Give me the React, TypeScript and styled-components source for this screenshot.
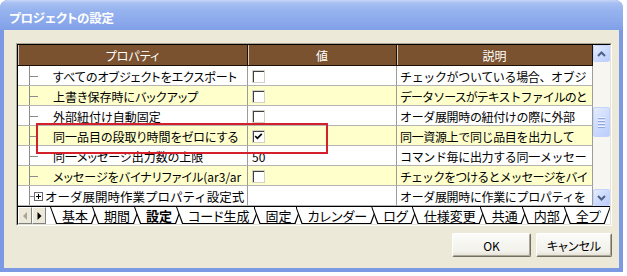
import React from 'react';
import styled, { createGlobalStyle } from 'styled-components';

const Global = createGlobalStyle`
  html, body { margin: 0; padding: 0; background: #ffffff; }
  body {
    font-family: "Noto Sans CJK JP", "Noto Sans", sans-serif;
    font-size: 12px;
    color: #000;
    font-feature-settings: "palt";
  }
`;

const Window = styled.div`
  width: 623px;
  height: 272px;
  display: flex;
  flex-direction: column;
  background: #7b9ae3;
  border-radius: 8px 8px 0 0;
  overflow: hidden;
`;

const TitleBar = styled.div`
  height: 30px;
  flex: none;
  box-sizing: border-box;
  display: flex;
  align-items: center;
  padding: 4px 0 0 9px;
  background: linear-gradient(#c6d6f8 0%, #a8c0f2 10%, #96b3ef 35%, #8dabec 65%, #819fe6 100%);
  color: #fff;
  font-weight: bold;
  font-size: 12.5px;
  letter-spacing: -0.2px;
`;

const Body = styled.div`
  flex: 1;
  margin: 0 4px 4px 4px;
  background: #ece9d8;
  padding: 13px 7px 0 12px;
  display: flex;
  flex-direction: column;
`;

const Frame = styled.div`
  position: relative;
  width: 596px;
  height: 183px;
  box-sizing: border-box;
  border: 1px solid;
  border-color: #aca899 #ffffff #ffffff #aca899;
`;

const FrameInner = styled.div`
  height: 100%;
  box-sizing: border-box;
  border: 1px solid;
  border-color: #000 #e3e0d4 #e3e0d4 #000;
  display: grid;
  grid-template-columns: 230px 149px 196px 1fr;
  grid-template-rows: 21px repeat(7, 20px) 1fr;
  background: #fff;
`;

const HeaderCell = styled.div`
  box-sizing: border-box;
  background: #7a5230;
  color: #fff;
  display: flex;
  align-items: center;
  justify-content: center;
  padding-top: 1px;
  border-right: 1px solid #1a1008;
  border-bottom: 1px solid #1a1008;
  box-shadow: inset 1px 0 0 #d9c6b2;
`;

const Cell = styled.div<{ $alt: boolean }>`
  box-sizing: border-box;
  background: ${p => (p.$alt ? '#ffffcc' : '#ffffff')};
  border-right: 1px solid #9c9c9c;
  border-bottom: 1px solid #b4b4b4;
  display: flex;
  align-items: center;
  overflow: hidden;
  white-space: nowrap;
`;

const PropCell = styled(Cell)`
  padding-left: 11px;
  align-items: stretch;
`;

const Connector = styled.span<{ $w: number }>`
  position: relative;
  flex: none;
  width: ${p => p.$w}px;
  border-left: 1px solid #8c8c8c;
  &::after {
    content: '';
    position: absolute;
    left: 0;
    top: 10px;
    width: ${p => p.$w}px;
    border-top: 1px solid #8c8c8c;
  }
`;

const PropText = styled.span<{ $gap: number; $big?: boolean }>`
  margin-left: ${p => p.$gap}px;
  padding-top: 1px;
  display: flex;
  align-items: center;
  font-size: ${p => (p.$big ? '12.5px' : '12px')};
  font-feature-settings: ${p => (p.$big ? 'normal' : '"palt"')};
`;

const Expander = styled.span`
  flex: none;
  align-self: center;
  width: 9px;
  height: 9px;
  margin-top: 1px;
  box-sizing: border-box;
  border: 1px solid #6a6a6a;
  background: #fff;
  position: relative;
  &::before {
    content: '';
    position: absolute;
    left: 1px;
    top: 3px;
    width: 5px;
    border-top: 1px solid #000;
  }
  &::after {
    content: '';
    position: absolute;
    left: 3px;
    top: 1px;
    height: 5px;
    border-left: 1px solid #000;
  }
`;

const ValueCell = styled(Cell)`
  padding: 1px 0 0 4px;
`;

const DescCell = styled(Cell)<{ $tight?: boolean }>`
  padding: 1px 0 0 3px;
  font-feature-settings: normal;
  letter-spacing: ${p => (p.$tight ? '-0.95px' : '-0.35px')};
`;

const CheckBox = styled.span`
  width: 13px;
  height: 13px;
  box-sizing: border-box;
  border: 1px solid;
  border-color: #808080 #ffffff #ffffff #808080;
  box-shadow: inset 1px 1px 0 #404040;
  background: #fff;
  display: flex;
  align-items: center;
  justify-content: center;
  outline: 1px solid #d4d0c8;
  outline-offset: -1px;
`;

const ScrollBar = styled.div`
  grid-column: 4;
  grid-row: 1 / 9;
  display: flex;
  flex-direction: column;
  background: #f7f6f1;
`;

const ScrollButton = styled.div`
  width: 17px;
  height: 17px;
  flex: none;
  box-sizing: border-box;
  border: 1px solid #c3d3fb;
  border-radius: 2px;
  background: linear-gradient(135deg, #e4ecfe 0%, #cddbfd 50%, #bccdfa 100%);
  display: flex;
  align-items: center;
  justify-content: center;
`;

const Track = styled.div`
  flex: 1;
  padding-top: 45px;
`;

const Thumb = styled(ScrollButton)`
  height: 30px;
  flex-direction: column;
  gap: 1px;
`;

const Grip = styled.span`
  width: 7px;
  height: 1px;
  background: #eef3fe;
  box-shadow: 0 1px 0 #8fa6df;
  margin-bottom: 1px;
`;

const TabStrip = styled.div`
  grid-column: 1 / -1;
  border-top: 1px solid #000;
  background: #fff;
  display: flex;
  align-items: flex-start;
  overflow: hidden;
`;

const NavButton = styled.div`
  width: 14px;
  height: 17px;
  flex: none;
  box-sizing: border-box;
  border: 1px solid;
  border-color: #ffffff #808080 #808080 #ffffff;
  background: #ece9d8;
  display: flex;
  align-items: center;
  justify-content: center;
`;

const Tabs = styled.div`
  display: flex;
  margin-left: 4px;
`;

const TAB_SHAPE = 'polygon(0 0, 100% 0, calc(100% - 6px) 100%, 6px 100%)';

const Tab = styled.div<{ $active?: boolean; $z: number }>`
  position: relative;
  z-index: ${p => p.$z};
  flex: none;
  height: 17px;
  padding: 0 10px 0 12px;
  margin-right: -6px;
  display: flex;
  align-items: center;
  font-size: 13px;
  font-weight: ${p => (p.$active ? 'bold' : 'normal')};
  &::before {
    content: '';
    position: absolute;
    inset: 0;
    background: #000;
    clip-path: ${TAB_SHAPE};
    z-index: -1;
  }
  &::after {
    content: '';
    position: absolute;
    inset: 0 1px 1px 1px;
    background: #fff;
    clip-path: ${TAB_SHAPE};
    z-index: -1;
  }
`;

const Highlight = styled.div`
  position: absolute;
  left: 19px;
  top: 79px;
  width: 292px;
  height: 31px;
  box-sizing: border-box;
  border: 2px solid #d3202a;
  pointer-events: none;
`;

const ButtonRow = styled.div`
  display: flex;
  justify-content: flex-end;
  gap: 5px;
  margin-top: 7px;
`;

const Button = styled.button<{ $w: number }>`
  width: ${p => p.$w}px;
  height: 24px;
  box-sizing: border-box;
  font-family: "Noto Sans CJK JP", "Noto Sans", sans-serif;
  font-size: 12px;
  font-feature-settings: "palt";
  color: #000;
  border: 1px solid;
  border-color: #ffffff #716f64 #716f64 #ffffff;
  box-shadow: inset -1px -1px 0 #aca899;
  border-radius: 2px;
  background: linear-gradient(#fbfbf9, #f2f1ea 80%, #e3e0d3);
  padding: 0;
`;

type Row = {
  name: string;
  value: 'box' | 'checked' | string;
  desc: string;
  group?: boolean;
};

const rows: Row[] = [
  { name: 'すべてのオブジェクトをエクスポート', value: 'box', desc: 'チェックがついている場合、オブジ' },
  { name: '上書き保存時にバックアップ', value: 'box', desc: 'データソースがテキストファイルのと' },
  { name: '外部紐付け自動固定', value: 'box', desc: 'オーダ展開時の紐付けの際に外部' },
  { name: '同一品目の段取り時間をゼロにする', value: 'checked', desc: '同一資源上で同じ品目を出力して' },
  { name: '同一メッセージ出力数の上限', value: '50', desc: 'コマンド毎に出力する同一メッセー' },
  { name: 'メッセージをバイナリファイル(ar3/ar', value: 'box', desc: 'チェックをつけるとメッセージをバイ' },
  { name: 'オーダ展開時作業プロパティ設定式', value: '', desc: 'オーダ展開時に作業にプロパティを', group: true },
];

const tabs = ['基本', '期間', '設定', 'コード生成', '固定', 'カレンダー', 'ログ', '仕様変更', '共通', '内部', '全プ'];

const ChevronUp = () => (
  <svg width="9" height="6" viewBox="0 0 9 6">
    <polyline points="1,5 4.5,1.5 8,5" fill="none" stroke="#4d6185" strokeWidth="2" />
  </svg>
);

const ChevronDown = () => (
  <svg width="9" height="6" viewBox="0 0 9 6">
    <polyline points="1,1 4.5,4.5 8,1" fill="none" stroke="#4d6185" strokeWidth="2" />
  </svg>
);

const CheckMark = () => (
  <svg width="9" height="9" viewBox="0 0 9 9">
    <polyline points="1.2,4 3.4,6.3 7.8,1.8" fill="none" stroke="#000" strokeWidth="1.7" />
  </svg>
);

const ArrowLeft = () => (
  <svg width="5" height="8" viewBox="0 0 5 8">
    <polygon points="4,0 4,8 0,4" fill="#a7a59a" />
  </svg>
);

const ArrowRight = () => (
  <svg width="5" height="8" viewBox="0 0 5 8">
    <polygon points="0.5,0 0.5,8 4.5,4" fill="#000" />
  </svg>
);

export default function App() {
  return (
    <>
      <Global />
      <Window>
        <TitleBar>プロジェクトの設定</TitleBar>
        <Body>
          <Frame>
            <FrameInner>
              <HeaderCell>プロパティ</HeaderCell>
              <HeaderCell>値</HeaderCell>
              <HeaderCell>説明</HeaderCell>
              <ScrollBar>
                <ScrollButton>
                  <ChevronUp />
                </ScrollButton>
                <Track>
                  <Thumb>
                    <Grip />
                    <Grip />
                    <Grip />
                    <Grip />
                  </Thumb>
                </Track>
                <ScrollButton>
                  <ChevronDown />
                </ScrollButton>
              </ScrollBar>
              {rows.map((r, i) => {
                const alt = i % 2 === 1;
                return (
                  <React.Fragment key={i}>
                    <PropCell $alt={alt}>
                      {r.group ? (
                        <>
                          <Connector $w={4} />
                          <Expander />
                          <PropText $gap={2} $big>
                            {r.name}
                          </PropText>
                        </>
                      ) : (
                        <>
                          <Connector $w={8} />
                          <PropText $gap={15}>{r.name}</PropText>
                        </>
                      )}
                    </PropCell>
                    <ValueCell $alt={alt}>
                      {r.value === 'box' && <CheckBox />}
                      {r.value === 'checked' && (
                        <CheckBox>
                          <CheckMark />
                        </CheckBox>
                      )}
                      {r.value !== 'box' && r.value !== 'checked' && r.value}
                    </ValueCell>
                    <DescCell $alt={alt} $tight={r.desc.length > 16}>
                      {r.desc}
                    </DescCell>
                  </React.Fragment>
                );
              })}
              <TabStrip>
                <NavButton>
                  <ArrowLeft />
                </NavButton>
                <NavButton>
                  <ArrowRight />
                </NavButton>
                <Tabs>
                  {tabs.map((t, i) => (
                    <Tab key={t} $z={i + 1} $active={t === '設定'}>
                      {t}
                    </Tab>
                  ))}
                </Tabs>
              </TabStrip>
            </FrameInner>
            <Highlight />
          </Frame>
          <ButtonRow>
            <Button $w={79}>OK</Button>
            <Button $w={76}>キャンセル</Button>
          </ButtonRow>
        </Body>
      </Window>
    </>
  );
}
